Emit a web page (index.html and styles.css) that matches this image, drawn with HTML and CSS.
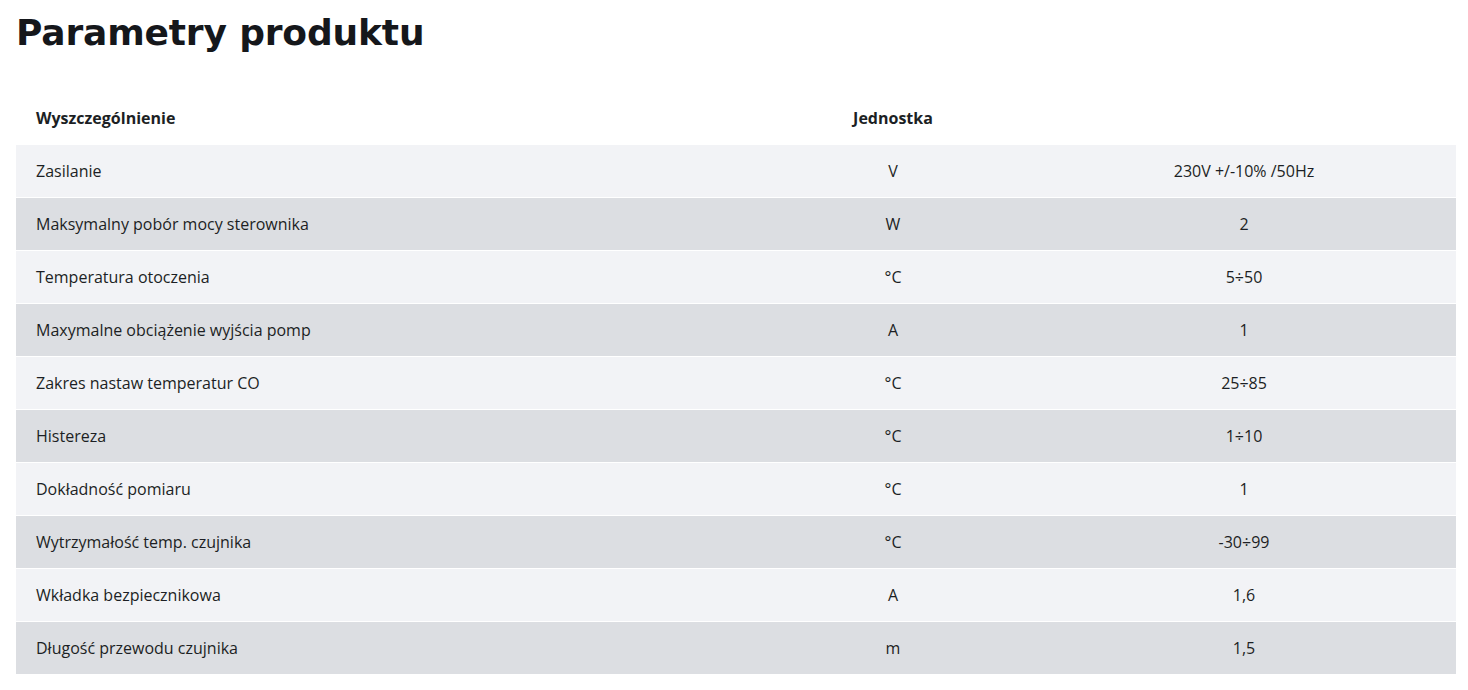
FILE: index.html
```html
<!DOCTYPE html>
<html lang="pl">
<head>
<meta charset="utf-8">
<title>Parametry produktu</title>
<link rel="stylesheet" href="styles.css">
</head>
<body>
<main class="page">
  <h1 class="title">Parametry produktu</h1>
  <table class="params">
    <colgroup>
      <col class="c-name">
      <col class="c-unit">
      <col class="c-value">
    </colgroup>
    <thead>
      <tr>
        <th class="name">Wyszczególnienie</th>
        <th class="unit">Jednostka</th>
        <th class="value"></th>
      </tr>
    </thead>
    <tbody>
      <tr><td class="name">Zasilanie</td><td class="unit">V</td><td class="value">230V +/-10% /50Hz</td></tr>
      <tr><td class="name">Maksymalny pobór mocy sterownika</td><td class="unit">W</td><td class="value">2</td></tr>
      <tr><td class="name">Temperatura otoczenia</td><td class="unit">°C</td><td class="value">5÷50</td></tr>
      <tr><td class="name">Maxymalne obciążenie wyjścia pomp</td><td class="unit">A</td><td class="value">1</td></tr>
      <tr><td class="name">Zakres nastaw temperatur CO</td><td class="unit">°C</td><td class="value">25÷85</td></tr>
      <tr><td class="name">Histereza</td><td class="unit">°C</td><td class="value">1÷10</td></tr>
      <tr><td class="name">Dokładność pomiaru</td><td class="unit">°C</td><td class="value">1</td></tr>
      <tr><td class="name">Wytrzymałość temp. czujnika</td><td class="unit">°C</td><td class="value">-30÷99</td></tr>
      <tr><td class="name">Wkładka bezpiecznikowa</td><td class="unit">A</td><td class="value">1,6</td></tr>
      <tr><td class="name">Długość przewodu czujnika</td><td class="unit">m</td><td class="value">1,5</td></tr>
    </tbody>
  </table>
</main>
</body>
</html>
```

FILE: styles.css
```css
html, body {
  margin: 0;
  padding: 0;
  background: #ffffff;
}

.page {
  padding: 0 12px 0 16px;
  font-family: "Open Sans", "Noto Sans", sans-serif;
  color: #1c1f24;
}

.title {
  margin: 0;
  padding-top: 9px;
  font-family: "DejaVu Sans", sans-serif;
  font-weight: 700;
  font-size: 36px;
  line-height: 48px;
  letter-spacing: -0.15px;
  color: #15171b;
}

.params {
  margin-top: 35px;
  width: 1440px;
  border-collapse: collapse;
  table-layout: fixed;
  font-size: 16px;
}

.c-name { width: 738px; }
.c-unit { width: 278px; }
.c-value { width: 424px; }

.params th,
.params td {
  height: 52px;
  padding: 0 20px;
  vertical-align: middle;
  line-height: 22px;
}

.params th {
  font-weight: 700;
  font-size: 16px;
}

.params tbody tr {
  border-top: 1px solid #ffffff;
}

.params tbody tr:nth-child(odd) {
  background: #f2f3f6;
}

.params tbody tr:nth-child(even) {
  background: #dcdee2;
}

.params .name { text-align: left; }
.params .unit { text-align: center; }
.params .value { text-align: center; }
```
